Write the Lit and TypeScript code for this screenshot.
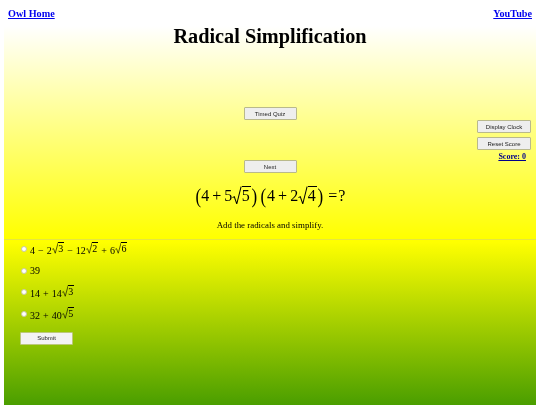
import { LitElement, html, css } from "lit";
import { customElement } from "lit/decorators.js";

const sq = (n: string) => html`<span class="rad"><svg class="surd" viewBox="0 0 10 24" preserveAspectRatio="none"><path d="M0.5 14.5 L2.4 13.4 L5 22.5 L9.6 0.6" fill="none" stroke="currentColor" stroke-width="1.1"/></svg><span class="under">${n}</span></span>`;

@customElement("app-root")
export class AppRoot extends LitElement {
  static styles = css`
    :host { display: block; width: 540px; height: 405px; overflow: hidden; background: #fff; font-family: "Liberation Serif", serif; color: #000; filter: blur(.3px); }
    a { color: #00e; text-decoration: underline; font-weight: bold; }
    .top { display: flex; justify-content: space-between; padding: 8px 8px 0; height: 18px; font-size: 10.2px; line-height: 12px; box-sizing: border-box; }
    .grad { margin: 8px 4px 0; height: 379px; box-sizing: border-box; background: linear-gradient(180deg, #fff 0, #ffff00 56%, #ffff00 57%, #4a9e00 100%); display: flex; flex-direction: column; }
    h1 { margin: -2px 0 0; font-size: 20.3px; line-height: 24px; text-align: center; }
    button { font-family: "Liberation Sans", sans-serif; font-size: 6px; height: 13px; width: 53px; padding: 0; color: #222; background: #eee; border: 1px solid #b9b98c; border-radius: 1px; box-sizing: border-box; display: block; }
    .stage { display: grid; grid-template-columns: 1fr 53px 1fr; height: 75px; margin-top: 59px; }
    .center { grid-column: 2; display: flex; flex-direction: column; justify-content: space-between; height: 66px; }
    .right { grid-column: 3; display: flex; flex-direction: column; align-items: flex-end; padding: 13px 5px 0 0; gap: 4px; }
    .right button { width: 54px; }
    .score { font-size: 8px; font-weight: bold; text-decoration: underline; color: #00008b; line-height: 10px; margin: -2px 5px 0 0; }
    .eq { display: flex; justify-content: center; align-items: center; font-size: 16px; height: 28px; }
    .paren { font-size: 20px; font-weight: 400; line-height: 28px; transform: scaleX(.85); }
    .gap { width: 3px; }
    .eq .op { margin: 0 3px; }
    .eq .eqs { margin: 0 1px 0 5px; }
    .rad { display: inline-flex; align-items: stretch; }
    .surd { width: 9.5px; height: 1.2em; display: block; }
    .under { border-top: 1px solid currentColor; line-height: 1.1em; padding: 0 1px 0 0; }
    .hint { text-align: center; font-size: 8.9px; line-height: 12px; margin-top: 9px; }
    hr { margin: 8px 0 0; height: 1px; border: 0; background: #e6e640; }
    .opts { margin-top: -2px; padding: 0 0 0 17px; display: flex; flex-direction: column; }
    .opt { display: flex; align-items: center; font-size: 10px; height: 21.7px; gap: 3px; }
    .opt .op { margin: 0 3px; }
    .opt .surd { width: 6.5px; }
    .dot { width: 6px; height: 6px; border-radius: 50%; background: #fff; border: .5px solid #c8c8a0; box-sizing: border-box; }
    .sub { margin: 7px 0 0 16px; }
    .sub button { background: #f3f3f3; border-color: #bcc87a; }
  `;

  render() {
    return html`
      <div class="top"><a href="#">Owl Home</a><a href="#">YouTube</a></div>
      <div class="grad">
        <h1>Radical Simplification</h1>
        <div class="stage">
          <div class="center"><button>Timed Quiz</button><button>Next</button></div>
          <div class="right">
            <button>Display Clock</button>
            <button>Reset Score</button>
            <span class="score">Score: 0</span>
          </div>
        </div>
        <div class="eq">
          <span class="paren">(</span>4<span class="op">+</span>5${sq("5")}<span class="paren">)</span>
          <span class="gap"></span>
          <span class="paren">(</span>4<span class="op">+</span>2${sq("4")}<span class="paren">)</span>
          <span class="eqs">=</span>?
        </div>
        <div class="hint">Add the radicals and simplify.</div>
        <hr />
        <div class="opts">
          <div class="opt"><span class="dot"></span><span>4<span class="op">−</span>2${sq("3")}<span class="op">−</span>12${sq("2")}<span class="op">+</span>6${sq("6")}</span></div>
          <div class="opt"><span class="dot"></span><span>39</span></div>
          <div class="opt"><span class="dot"></span><span>14<span class="op">+</span>14${sq("3")}</span></div>
          <div class="opt"><span class="dot"></span><span>32<span class="op">+</span>40${sq("5")}</span></div>
        </div>
        <div class="sub"><button>Submit</button></div>
      </div>
    `;
  }
}
